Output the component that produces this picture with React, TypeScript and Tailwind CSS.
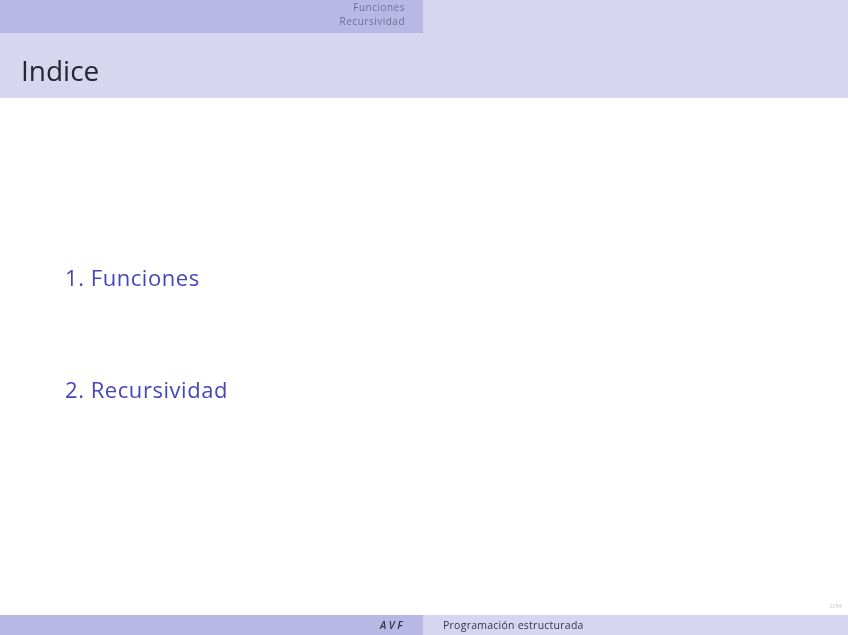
export default function App() {
  return (
    <div className="flex h-[635px] w-[848px] flex-col overflow-hidden bg-white font-['Open_Sans','DejaVu_Sans',sans-serif]">
      {/* top navigation */}
      <header className="flex h-[36px] shrink-0 bg-[#d6d6f1]">
        <div className="flex h-[33px] w-[423px] flex-col items-end bg-[#b8b8e4] pr-[18px] text-[10px] leading-[14px] tracking-[0.5px] text-[#6f6f92] blur-[0.6px]">
          <span>Funciones</span>
          <span>Recursividad</span>
        </div>
      </header>

      {/* frame title */}
      <div className="flex h-[62px] shrink-0 items-center bg-[#d6d6f1] pl-[21px] pt-[6px] text-[28px] text-[#26262e] blur-[0.5px]">
        Indice
      </div>

      {/* contents */}
      <main className="flex flex-1 flex-col pl-[65px] pt-[164px] text-[22px] leading-[30px] tracking-[0.55px] text-[#4646bc] blur-[0.5px]">
        <p>1. Funciones</p>
        <p className="mt-[82px]">2. Recursividad</p>
        <div className="mt-auto flex justify-end pb-[5px] pr-[6px] text-[6px] leading-[8px] tracking-normal text-[#c4c4de]">2/34</div>
      </main>

      {/* footer */}
      <footer className="flex h-[20px] shrink-0 text-[10.5px] leading-[20px] text-[#34344a]">
        <div className="flex w-[423px] justify-end bg-[#b8b8e4] pr-[18px]">
          <span className="font-semibold italic tracking-[2.5px] blur-[0.5px]">AVF</span>
        </div>
        <div className="flex-1 bg-[#d6d6f1] pl-[20px]">
          <span className="tracking-[0.25px] blur-[0.5px]">Programación estructurada</span>
        </div>
      </footer>
    </div>
  )
}
